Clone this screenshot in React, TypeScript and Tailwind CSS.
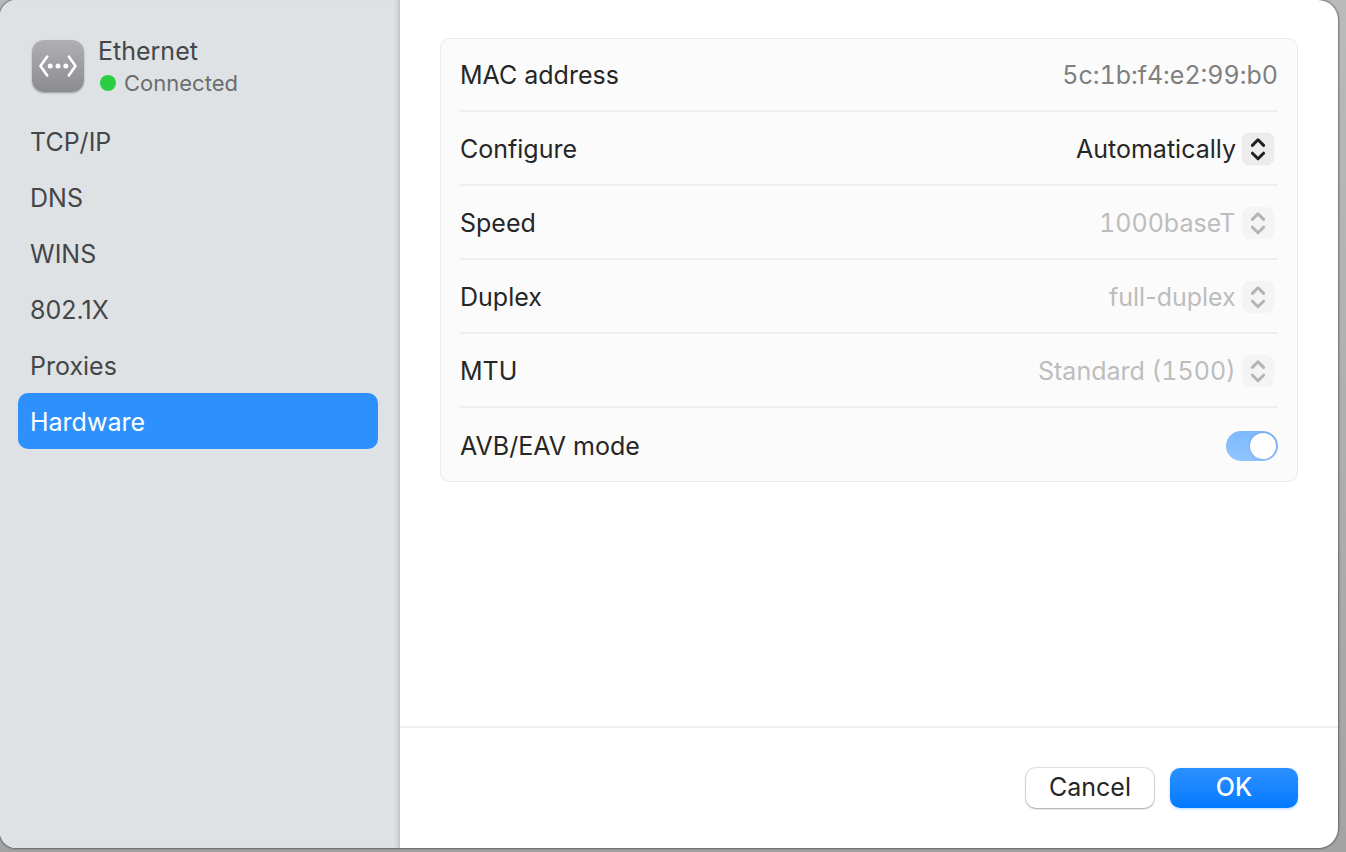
import { useState } from 'react';
import clsx from 'clsx';

const TABS = ['TCP/IP', 'DNS', 'WINS', '802.1X', 'Proxies', 'Hardware'];

const SELECT_ROWS = [
  { id: 'configure', label: 'Configure', value: 'Automatically',   numeric: false, disabled: false },
  { id: 'speed',     label: 'Speed',     value: '1000baseT',       numeric: true,  disabled: true  },
  { id: 'duplex',    label: 'Duplex',    value: 'full-duplex',     numeric: false, disabled: true  },
  { id: 'mtu',       label: 'MTU',       value: 'Standard (1500)', numeric: true,  disabled: true  },
];

const ROW = 'flex h-[74px] items-center justify-between border-b-2 border-[#eeeeee] pt-0.5 last:border-b-0';

function EthernetIcon() {
  return (
    <svg viewBox="0 0 52 52" className="h-[52px] w-[52px] shrink-0 rounded-xl bg-linear-to-b from-[#b0b0b4] to-[#8c8b90] shadow-[0_1px_2px_rgba(0,0,0,0.3)]" aria-hidden="true">
      <g fill="none" stroke="#fff" strokeWidth="2.6" strokeLinecap="round" strokeLinejoin="round">
        <path d="M15.2 16.5 8.5 26l6.7 9.5" />
        <path d="M36.8 16.5 43.5 26l-6.7 9.5" />
      </g>
      <g fill="#fff">
        <circle cx="18.2" cy="26" r="2.5" />
        <circle cx="26" cy="26" r="2.5" />
        <circle cx="33.8" cy="26" r="2.5" />
      </g>
    </svg>
  );
}

function PopUpArrows({ disabled }: { disabled: boolean }) {
  return (
    <span
      className={clsx(
        'pointer-events-none col-start-1 row-start-1 mr-1 flex h-8 w-8 items-center justify-center justify-self-end rounded-lg',
        disabled ? 'bg-[#f4f4f4] text-[#b4b4b4]' : 'bg-[#ececec] text-[#1f1f1f] shadow-[0_0_1px_rgba(0,0,0,0.2)]',
      )}
    >
      <svg viewBox="0 0 32 32" className="h-8 w-8" fill="none" stroke="currentColor" strokeWidth="3" strokeLinecap="round" strokeLinejoin="round" aria-hidden="true">
        <path d="M10.4 12.4 16 6.8l5.6 5.6" />
        <path d="M10.4 20.2 16 25.8l5.6-5.6" />
      </svg>
    </span>
  );
}

export default function App() {
  const [tab, setTab] = useState('Hardware');

  return (
    <div className="min-h-screen bg-linear-to-b from-[#b9bbbb] to-[#a3a3a3] pr-2 pb-1 font-['Inter',sans-serif] text-[25px] leading-8 text-[#262626]">
      <div className="flex min-h-[calc(100vh-4px)] overflow-hidden rounded-l-2xl rounded-r-[20px] bg-white shadow-[0_0_2px_1px_rgba(0,0,0,0.4)]">
        {/* Sidebar */}
        <aside className="w-[400px] shrink-0 border-r border-[#c3c6c8] bg-[#dee2e5] pr-[21px] pl-[18px] text-[#444648] shadow-[inset_-4px_0_5px_-3px_rgba(0,0,0,0.15)]">
          <div className="flex h-[113px] items-start gap-[14px] pt-[35px] pl-[14px]">
            <div className="pt-[5px]">
              <EthernetIcon />
            </div>
            <div>
              <h1>Ethernet</h1>
              <p className="flex items-center gap-2 text-[22px] text-[#6b6d6f]">
                <span className="ml-0.5 h-4 w-4 rounded-full bg-[#2ace43]" />
                Connected
              </p>
            </div>
          </div>
          <nav className="flex flex-col">
            {TABS.map((name) => (
              <button
                key={name}
                type="button"
                onClick={() => setTab(name)}
                className={clsx('h-14 rounded-[10px] px-3 pt-0.5 text-left', name === tab && 'bg-[#2e90fd] text-white')}
              >
                {name}
              </button>
            ))}
          </nav>
        </aside>

        <main className="flex min-w-0 flex-1 flex-col">
          {/* Settings */}
          <div className="flex-1 px-10 pt-[38px]">
            <div className="rounded-[10px] bg-[#fbfbfb] px-5 ring-1 ring-[#ebebeb] ring-inset">
              <div className={ROW}>
                <span>MAC address</span>
                <span className="text-[#7f7f7f] tabular-nums">5c:1b:f4:e2:99:b0</span>
              </div>
              {SELECT_ROWS.map((row) => (
                <div key={row.id} className={ROW}>
                  <label htmlFor={row.id}>{row.label}</label>
                  <div className="grid items-center">
                    <select
                      id={row.id}
                      disabled={row.disabled}
                      className={clsx(
                        'col-start-1 row-start-1 appearance-none bg-transparent pr-[42px] disabled:text-[#bdbdbd] disabled:opacity-100',
                        row.numeric && 'tabular-nums',
                      )}
                    >
                      <option>{row.value}</option>
                    </select>
                    <PopUpArrows disabled={row.disabled} />
                  </div>
                </div>
              ))}
              <div className={ROW}>
                <label htmlFor="avb">AVB/EAV mode</label>
                <input
                  id="avb"
                  type="checkbox"
                  role="switch"
                  defaultChecked
                  disabled
                  className="flex h-[30px] w-[52px] appearance-none items-center rounded-full bg-[#dcdcdc] p-0.5 before:h-[26px] before:w-[26px] before:rounded-full before:bg-white before:shadow-[0_0_3px_rgba(0,0,0,0.2)] checked:justify-end checked:bg-linear-to-b checked:from-[#7fb9fc] checked:to-[#8fc4ff]"
                />
              </div>
            </div>
          </div>

          {/* Footer */}
          <footer className="flex justify-end gap-4 border-t-2 border-[#f0f0f0] px-10 py-10">
            <button type="button" className="h-10 w-32 rounded-[10px] bg-white pb-0.5 shadow-[0_0_1px_1px_rgba(0,0,0,0.12),0_1px_2px_rgba(0,0,0,0.25)]">
              Cancel
            </button>
            <button type="button" className="h-10 w-32 rounded-[10px] bg-linear-to-b from-[#2a90ff] to-[#007aff] pb-0.5 font-medium text-white shadow-[0_1px_3px_rgba(0,122,255,0.3)]">
              OK
            </button>
          </footer>
        </main>
      </div>
    </div>
  );
}
